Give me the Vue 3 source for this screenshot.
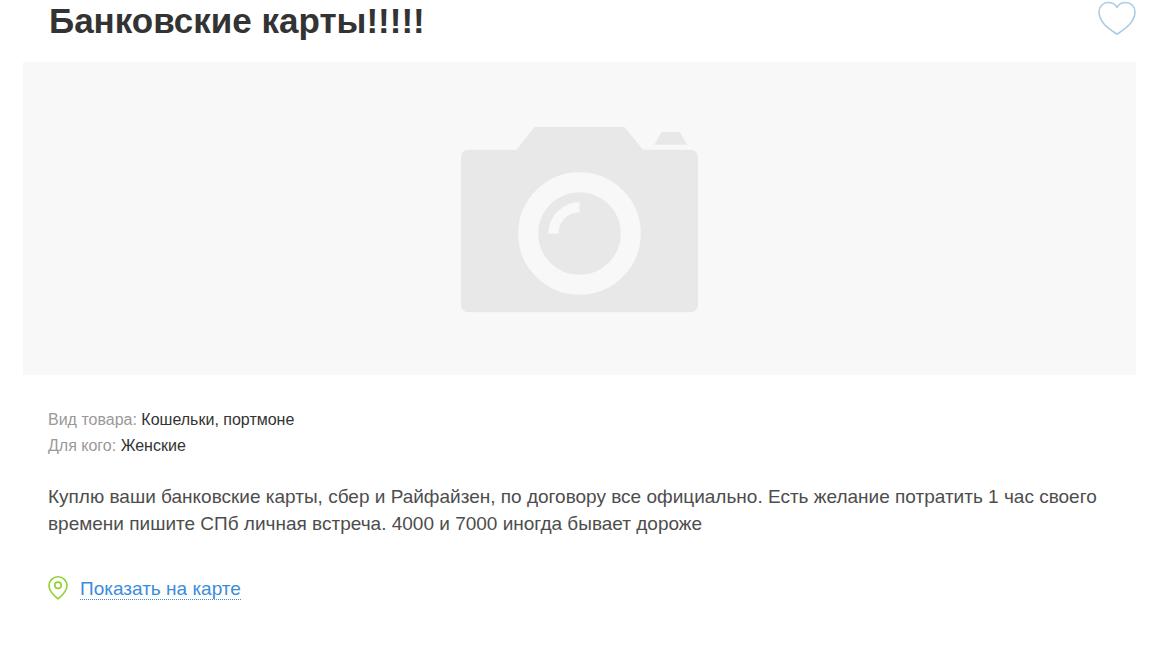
<script setup>
const params = [
  { label: 'Вид товара:', value: 'Кошельки, портмоне' },
  { label: 'Для кого:', value: 'Женские' },
]
</script>

<template>
  <main class="ad">
    <header class="head">
      <h1>Банковские карты!!!!!</h1>
      <button class="fav" type="button" aria-label="Добавить в избранное">
        <svg width="38" height="36" viewBox="0 0 38 36" fill="none" stroke="#a9cce6" stroke-width="1.6" stroke-linejoin="round">
          <path d="M19 34.200C15 31.500 10.500 28.800 6.500 24.500C3 20.500 1 16.500 1 12C1 6.500 5 2.500 10.200 2.500C14.500 2.500 17.500 4.500 19 7.300C20.500 4.500 23.500 2.500 27.800 2.500C33 2.500 37 6.500 37 12C37 16.500 35 20.500 31.500 24.500C27.500 28.800 23 31.500 19 34.200Z" />
        </svg>
      </button>
    </header>

    <div class="photo">
      <svg width="237" height="186" viewBox="0 0 237 186" aria-hidden="true">
        <path fill="#e8e8e8" d="M8 22.700H55.500L73.500 0H163.500L182 22.700H229Q237 22.700 237 30.700V177.300Q237 185.300 229 185.300H8Q0 185.300 0 177.300V30.700Q0 22.700 8 22.700Z" />
        <path fill="#e8e8e8" d="M200.700 5H218.700L226 17.700H193.300Z" />
        <circle cx="118.500" cy="106.500" r="51.300" fill="none" stroke="#f8f8f8" stroke-width="20" />
        <path d="M92.500 106.700A26 26 0 0 1 118.500 80.300" fill="none" stroke="#f8f8f8" stroke-width="10" />
      </svg>
    </div>

    <section class="body">
      <dl class="params">
        <div v-for="p in params" :key="p.label">
          <dt>{{ p.label }}</dt>{{ ' ' }}<dd>{{ p.value }}</dd>
        </div>
      </dl>
      <p class="text">Куплю ваши банковские карты, сбер и Райфайзен, по договору все официально. Есть желание потратить 1 час своего времени пишите СПб личная встреча. 4000 и 7000 иногда бывает дороже</p>
      <div class="map">
        <svg width="20" height="24" viewBox="0 0 20 24" fill="none" stroke="#8fd130" stroke-width="1.6" aria-hidden="true">
          <path d="M10 22.800C6.500 20 1 15 1 9.700A9 8.900 0 0 1 19 9.700C19 15 13.500 20 10 22.800Z" stroke-linejoin="round" />
          <circle cx="10" cy="9.300" r="3.200" />
        </svg>
        <a href="#map">Показать на карте</a>
      </div>
    </section>
  </main>
</template>

<style>
body { margin: 0; background: #fff; }
</style>

<style scoped>
.ad { padding: 0 38px 0 23px; font-family: "Liberation Sans", Arial, sans-serif; color: #333; }
.head { display: flex; justify-content: space-between; align-items: flex-start; height: 62px; padding-left: 26px; }
h1 { margin: 0; font-size: 35px; line-height: 42px; font-weight: 700; }
.fav { border: 0; padding: 0; margin: 0; background: none; cursor: pointer; }
.fav svg { display: block; }
.photo { display: flex; justify-content: center; padding: 65px 0 62px; background: #f8f8f8; }
.photo svg { display: block; }
.body { padding: 32px 25px 0; }
.params { margin: 0; font-size: 16px; line-height: 26px; }
.params dt, .params dd { display: inline; margin: 0; }
.params dt { color: #999; }
.text { margin: 24px 0 0; font-size: 19px; line-height: 27px; color: #4d4d4d; }
.map { display: flex; align-items: center; gap: 12px; margin-top: 38px; }
.map a { padding-top: 4px; font-size: 19px; line-height: 20px; color: #3a8ddb; text-decoration: none; border-bottom: 1px dotted #3a8ddb; }
</style>
